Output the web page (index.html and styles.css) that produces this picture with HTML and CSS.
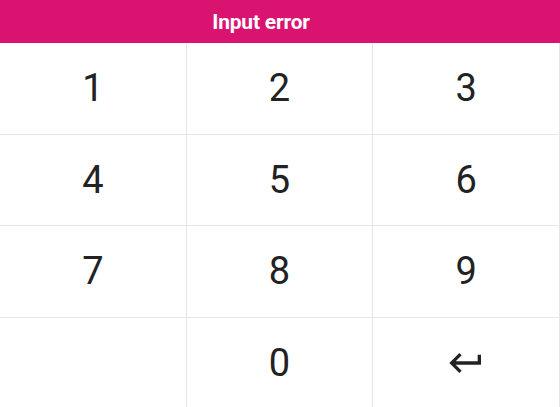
FILE: index.html
```html
<!DOCTYPE html>
<html>
<head>
<meta charset="utf-8">
<link rel="stylesheet" href="styles.css">
</head>
<body>
<div class="app">
  <div class="header"><span class="title">Input error</span></div>
  <div class="pad">
    <div class="key">1</div>
    <div class="key">2</div>
    <div class="key">3</div>
    <div class="key">4</div>
    <div class="key">5</div>
    <div class="key">6</div>
    <div class="key">7</div>
    <div class="key">8</div>
    <div class="key">9</div>
    <div class="key"></div>
    <div class="key">0</div>
    <div class="key"><svg class="enter" viewBox="0 0 24 24" width="40" height="40"><path d="M19 7v4H5.83l3.58-3.59L8 6l-6 6 6 6 1.41-1.41L5.83 13H21V7z" fill="#222"/></svg></div>
  </div>
</div>
</body>
</html>
```
FILE: styles.css
```css
html, body {
  margin: 0;
  padding: 0;
  background: #fff;
  overflow: hidden;
}
.app {
  width: 560px;
  height: 407px;
  display: flex;
  flex-direction: column;
  overflow: hidden;
  font-family: Roboto, "Liberation Sans", sans-serif;
}
.header {
  height: 43px;
  flex: none;
  background: #da1270;
  color: #fff;
  font-weight: 700;
  font-size: 21px;
  display: flex;
  align-items: center;
  justify-content: center;
  padding-right: 38px;
  letter-spacing: -0.2px;
}
.pad {
  flex: none;
  display: grid;
  grid-template-columns: repeat(3, 1fr);
  grid-template-rows: repeat(4, 91.5px);
}
.key {
  display: flex;
  align-items: center;
  justify-content: center;
  font-size: 38px;
  color: #222;
  border-right: 1.5px solid #e6e6e6;
  border-bottom: 1.5px solid #e6e6e6;
}
.enter {
  display: block;
}
```
